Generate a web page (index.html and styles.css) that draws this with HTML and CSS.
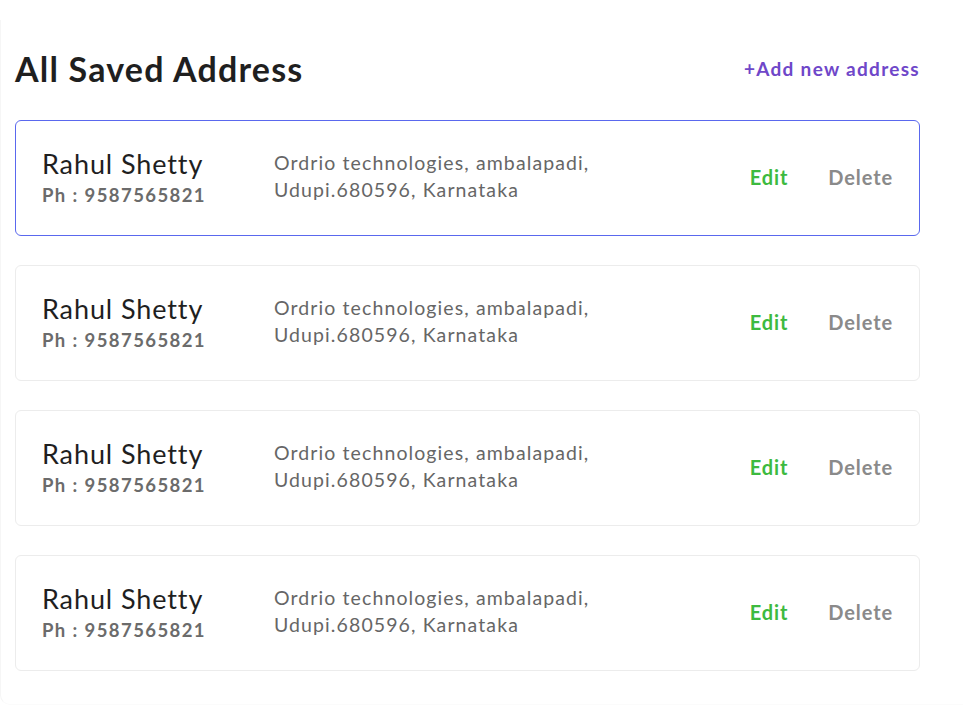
FILE: index.html
```html
<!DOCTYPE html>
<html>
<head>
<meta charset="utf-8">
<link rel="stylesheet" href="styles.css">
</head>
<body>
<div class="page">
  <div class="header">
    <h1 class="title">All Saved Address</h1>
    <a class="add-link">+Add new address</a>
  </div>
  <div class="list">
    <div class="card card-active">
      <div class="who">
        <div class="name">Rahul Shetty</div>
        <div class="phone">Ph : 9587565821</div>
      </div>
      <div class="addr">Ordrio technologies, ambalapadi,<br>Udupi.680596, Karnataka</div>
      <div class="actions">
        <span class="edit">Edit</span>
        <span class="delete">Delete</span>
      </div>
    </div>
    <div class="card">
      <div class="who">
        <div class="name">Rahul Shetty</div>
        <div class="phone">Ph : 9587565821</div>
      </div>
      <div class="addr">Ordrio technologies, ambalapadi,<br>Udupi.680596, Karnataka</div>
      <div class="actions">
        <span class="edit">Edit</span>
        <span class="delete">Delete</span>
      </div>
    </div>
    <div class="card">
      <div class="who">
        <div class="name">Rahul Shetty</div>
        <div class="phone">Ph : 9587565821</div>
      </div>
      <div class="addr">Ordrio technologies, ambalapadi,<br>Udupi.680596, Karnataka</div>
      <div class="actions">
        <span class="edit">Edit</span>
        <span class="delete">Delete</span>
      </div>
    </div>
    <div class="card">
      <div class="who">
        <div class="name">Rahul Shetty</div>
        <div class="phone">Ph : 9587565821</div>
      </div>
      <div class="addr">Ordrio technologies, ambalapadi,<br>Udupi.680596, Karnataka</div>
      <div class="actions">
        <span class="edit">Edit</span>
        <span class="delete">Delete</span>
      </div>
    </div>
  </div>
</div>
</body>
</html>
```

FILE: styles.css
```css
* { box-sizing: border-box; }
html, body { margin: 0; padding: 0; background: #ffffff; }
body {
  font-family: "Lato", "Open Sans", sans-serif;
  color: #222;
  width: 963px;
  height: 725px;
  overflow: hidden;
}
.page {
  margin-top: 20px;
  height: 685px;
  border-left: 1px solid #f6f6f6;
  border-bottom: 1px solid #fbfbfb;
  border-bottom-left-radius: 10px;
  padding: 26px 43px 0 14px;
}
.header {
  display: flex;
  align-items: center;
  justify-content: space-between;
  height: 44px;
}
.title {
  margin: 0;
  font-size: 34px;
  font-weight: 700;
  color: #1f1f1f;
  letter-spacing: 1.2px;
}
.add-link {
  font-size: 19px;
  font-weight: 700;
  color: #6f47c9;
  letter-spacing: 1.3px;
  margin-right: 0;
}
.list {
  margin-top: 30px;
  display: flex;
  flex-direction: column;
  gap: 29px;
}
.card {
  height: 116px;
  border: 1.5px solid #ececec;
  border-radius: 6px;
  display: flex;
  align-items: center;
  padding: 0 27px 0 26px;
}
.card-active {
  border: 1.8px solid #5a68ee;
}
.who {
  width: 232px;
  display: flex;
  flex-direction: column;
  margin-top: 1px;
}
.name {
  font-size: 27px;
  color: #1f1f1f;
  line-height: 32px;
  letter-spacing: 0.9px;
}
.phone {
  font-size: 18.5px;
  font-weight: 700;
  color: #6b6b6b;
  line-height: 30px;
  letter-spacing: 1.4px;
}
.addr {
  flex: 1;
  font-size: 19.5px;
  color: #666;
  line-height: 27px;
  letter-spacing: 1.1px;
  margin-top: -4px;
}
.actions {
  display: flex;
  gap: 40px;
  font-size: 20px;
  font-weight: 700;
  letter-spacing: 0.9px;
  margin-top: -2px;
  margin-right: -1px;
}
.edit { color: #3dba3f; }
.delete { color: #8a8a8a; }
```
